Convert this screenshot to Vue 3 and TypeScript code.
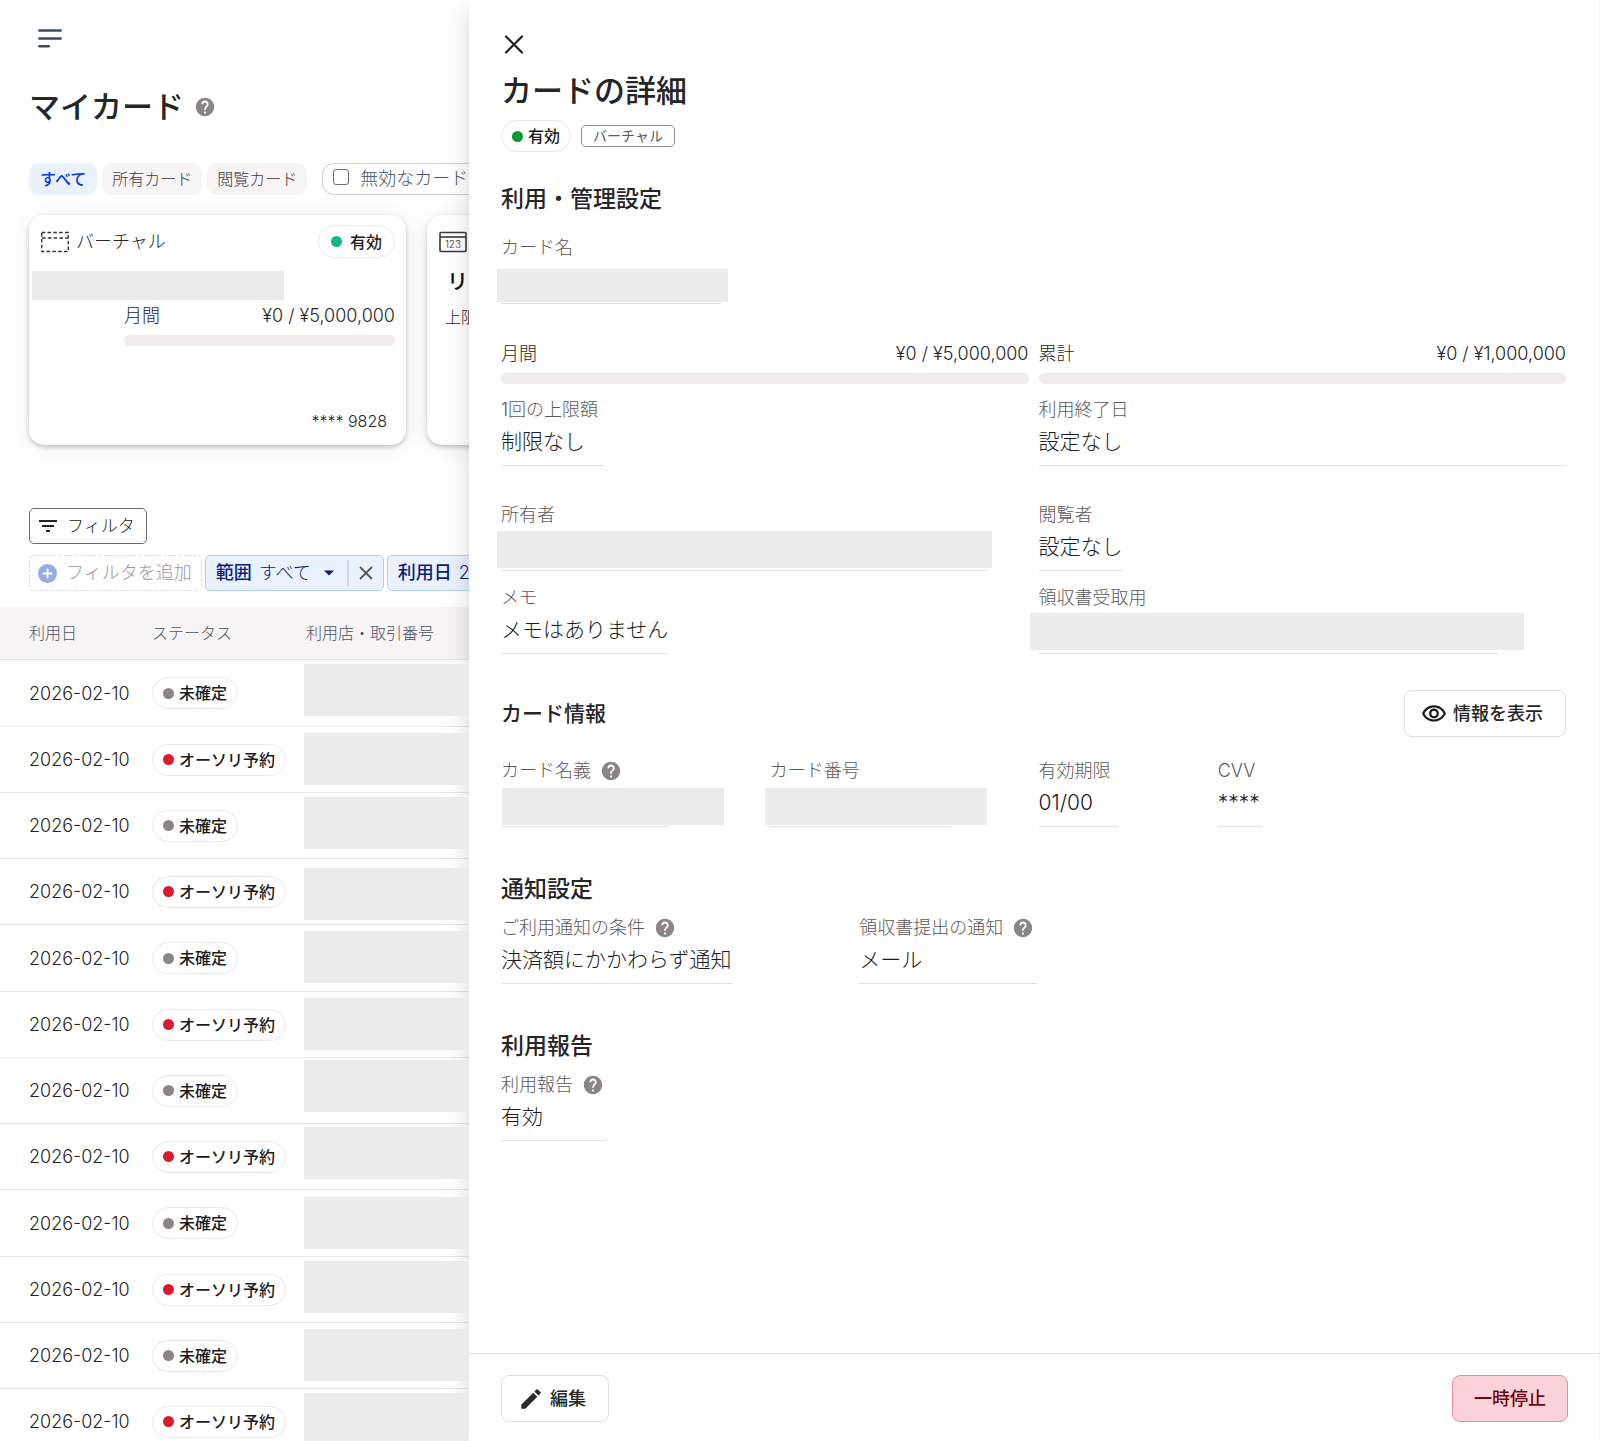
<script setup lang="ts">
import { defineComponent, h } from 'vue'

interface Mask {
  left: number
  top: number
  width: number
  line: number
  slim?: boolean
}

interface Field {
  label: string
  value?: string
  help?: boolean
  span: number
  stretch?: boolean
  mask?: Mask
}

interface Transaction {
  date: string
  status: 'pending' | 'authorized'
  maskTop: number
}

const HelpIcon = defineComponent({
  name: 'HelpIcon',
  render() {
    return h('svg', { viewBox: '0 0 24 24', width: 22, height: 22, fill: '#8b8585', 'aria-hidden': 'true' }, [
      h('path', {
        d: 'M12 2C6.48 2 2 6.48 2 12s4.48 10 10 10 10-4.48 10-10S17.52 2 12 2zm1 17h-2v-2h2v2zm2.07-7.75-.9.92C13.45 12.9 13 13.5 13 15h-2v-.5c0-1.1.45-2.1 1.17-2.83l1.24-1.26c.37-.36.59-.86.59-1.41 0-1.1-.9-2-2-2s-2 .9-2 2H8c0-2.21 1.79-4 4-4s4 1.79 4 4c0 .88-.36 1.68-.93 2.25z',
      }),
    ])
  },
})

const statusLabels = { pending: '未確定', authorized: 'オーソリ予約' }

const maskTops = [4, 6, 4, 9, 6, 6, 2, 3, 7, 4, 6, 4]
const transactions: Transaction[] = maskTops.map((maskTop, i) => ({
  date: '2026-02-10',
  status: i % 2 ? 'authorized' : 'pending',
  maskTop,
}))

const nameFields: Field[] = [
  { label: 'カード名', span: 6, mask: { left: -4, top: 35, width: 231, line: 220, slim: true } },
]

const limits = [
  { label: '月間', amount: '¥0 / ¥5,000,000' },
  { label: '累計', amount: '¥0 / ¥1,000,000' },
]

const limitFields: Field[] = [
  { label: '1回の上限額', value: '制限なし', span: 6 },
  { label: '利用終了日', value: '設定なし', span: 6, stretch: true },
]

const ownerFields: Field[] = [
  { label: '所有者', span: 6, mask: { left: -4, top: 30, width: 495, line: 487 } },
  { label: '閲覧者', value: '設定なし', span: 6 },
  { label: 'メモ', value: 'メモはありません', span: 6 },
  { label: '領収書受取用', span: 6, mask: { left: -9, top: 29, width: 494, line: 459 } },
]

const cardFields: Field[] = [
  { label: 'カード名義', help: true, span: 3, mask: { left: 1, top: 31, width: 222, line: 168 } },
  { label: 'カード番号', span: 3, mask: { left: -5, top: 31, width: 222, line: 181 } },
  { label: '有効期限', value: '01/00', span: 2 },
  { label: 'CVV', value: '****', span: 2 },
]

const noticeFields: Field[] = [
  { label: 'ご利用通知の条件', value: '決済額にかかわらず通知', help: true, span: 4 },
  { label: '領収書提出の通知', value: 'メール', help: true, span: 4 },
]

const reportFields: Field[] = [{ label: '利用報告', value: '有効', help: true, span: 4 }]

const FieldGrid = defineComponent({
  name: 'FieldGrid',
  props: { fields: { type: Array as () => Field[], required: true } },
  render() {
    return h(
      'dl',
      { class: 'field-grid' },
      this.fields.map((f) =>
        h('div', { class: ['field', `span-${f.span}`, { stretch: f.stretch }], key: f.label }, [
          h('dt', { class: 'field-label' }, [
            f.label,
            f.help
              ? h('button', { class: 'help', type: 'button', 'aria-label': `${f.label}の説明` }, [h(HelpIcon)])
              : null,
          ]),
          f.mask
            ? h('dd', { class: 'field-value', style: { width: `${f.mask.line}px` } }, [
                h('span', {
                  class: ['mask', { slim: f.mask.slim }],
                  style: { left: `${f.mask.left}px`, top: `${f.mask.top}px`, width: `${f.mask.width}px` },
                }),
              ])
            : h('dd', { class: 'field-value' }, f.value),
        ]),
      ),
    )
  },
})
</script>

<template>
  <div class="shell">
    <main class="page">
      <button class="menu" type="button" aria-label="メニュー">
        <svg width="24" height="20" viewBox="0 0 24 20" fill="none" stroke="#3d4a5f" stroke-width="2.4" stroke-linecap="round">
          <path d="M1.3 2.5h21.4M1.3 10.5h21.4M1.3 18.3h9.6" />
        </svg>
      </button>

      <h1 class="page-title">
        マイカード
        <button class="help" type="button" aria-label="マイカードの説明"><HelpIcon /></button>
      </h1>

      <div class="tabs">
        <button class="tab active" type="button">すべて</button>
        <button class="tab" type="button">所有カード</button>
        <button class="tab" type="button">閲覧カード</button>
        <label class="toggle"><input type="checkbox" />無効なカード</label>
      </div>

      <div class="cards">
        <article class="card">
          <header class="card-head">
            <svg width="28" height="22" viewBox="0 0 28 22" fill="none" stroke="#333" stroke-width="1.4" stroke-dasharray="3.6 2.2">
              <path d="M.7 1.5h26.6v19H.7zM1 7h26" />
            </svg>
            <span class="card-type">バーチャル</span>
            <span class="badge large"><i class="dot green"></i>有効</span>
          </header>
          <div class="card-mask"></div>
          <div class="card-limit">
            <div class="limit-row"><span>月間</span><span>¥0 / ¥5,000,000</span></div>
            <div class="bar"></div>
          </div>
          <p class="card-number">**** 9828</p>
        </article>
        <article class="card">
          <header class="card-head">
            <svg width="28" height="22" viewBox="0 0 28 22" fill="none" stroke="#3a3a3a" stroke-width="1.6">
              <rect x="1" y="1.5" width="26" height="19" rx="1" />
              <path d="M1 6h26" />
              <text x="14" y="17" text-anchor="middle" font-size="10" fill="#3a3a3a" stroke="none">123</text>
            </svg>
          </header>
          <p class="card-name">リン</p>
          <p class="card-cap">上限額</p>
        </article>
      </div>

      <div class="filters">
        <button class="filter-toggle" type="button">
          <svg width="18" height="12" viewBox="0 0 18 12" stroke="#222" stroke-width="1.8">
            <path d="M0 1h18M3 6h12M7 11h4" />
          </svg>
          フィルタ
        </button>
        <div class="chips">
          <button class="add-filter" type="button">
            <svg width="19" height="19" viewBox="0 0 20 20">
              <circle cx="10" cy="10" r="10" fill="#97abe6" />
              <path d="M10 5v10M5 10h10" stroke="#fff" stroke-width="1.9" />
            </svg>
            フィルタを追加
          </button>
          <div class="chip">
            <button class="chip-main" type="button">
              <b>範囲</b>すべて
              <svg width="10" height="6" viewBox="0 0 10 6" fill="#0a1f78"><path d="M0 .5h10L5 5.5z" /></svg>
            </button>
            <button class="chip-clear" type="button" aria-label="範囲を解除">
              <svg width="14" height="14" viewBox="0 0 14 14" stroke="#5c5656" stroke-width="1.8">
                <path d="M1 1l12 12M13 1L1 13" />
              </svg>
            </button>
          </div>
          <div class="chip wide">
            <button class="chip-main" type="button"><b>利用日</b>2</button>
          </div>
        </div>
      </div>

      <table class="transactions">
        <thead>
          <tr>
            <th class="col-date">利用日</th>
            <th class="col-status">ステータス</th>
            <th class="col-shop">利用店・取引番号</th>
          </tr>
        </thead>
        <tbody>
          <tr v-for="(t, i) in transactions" :key="i">
            <td class="col-date">{{ t.date }}</td>
            <td class="col-status">
              <span class="badge"><i class="dot" :class="t.status"></i>{{ statusLabels[t.status] }}</span>
            </td>
            <td class="col-shop"><div class="shop-mask" :style="{ marginTop: `${t.maskTop}px` }"></div></td>
          </tr>
        </tbody>
      </table>
    </main>

    <aside class="drawer" aria-labelledby="drawer-title">
      <div class="drawer-body">
        <button class="close" type="button" aria-label="閉じる">
          <svg width="20" height="20" viewBox="0 0 20 20" stroke="#1f1f1f" stroke-width="2.2" stroke-linecap="round">
            <path d="M2 2.5l16 16M18 2.5L2 18.5" />
          </svg>
        </button>
        <h2 id="drawer-title" class="drawer-title">カードの詳細</h2>
        <div class="tags">
          <span class="badge"><i class="dot deep"></i>有効</span>
          <span class="tag">バーチャル</span>
        </div>

        <section class="settings">
          <h3>利用・管理設定</h3>
          <FieldGrid :fields="nameFields" />
          <div class="limits">
            <div v-for="l in limits" :key="l.label">
              <div class="limit-row"><span>{{ l.label }}</span><span>{{ l.amount }}</span></div>
              <div class="bar"></div>
            </div>
          </div>
          <FieldGrid :fields="limitFields" />
          <FieldGrid class="owners" :fields="ownerFields" />
        </section>

        <section class="info">
          <div class="info-head">
            <h4>カード情報</h4>
            <button class="outlined" type="button">
              <svg width="26" height="26" viewBox="0 0 24 24" fill="#1a1a1a">
                <path d="M12 6c3.79 0 7.17 2.13 8.82 5.5C19.17 14.87 15.79 17 12 17s-7.17-2.13-8.82-5.5C4.83 8.13 8.21 6 12 6m0-2C7 4 2.73 7.11 1 11.5 2.73 15.89 7 19 12 19s9.27-3.11 11-7.5C21.27 7.11 17 4 12 4zm0 5c1.38 0 2.5 1.12 2.5 2.5S13.38 14 12 14s-2.5-1.12-2.5-2.5S10.62 9 12 9m0-2c-2.48 0-4.5 2.02-4.5 4.5S9.52 16 12 16s4.5-2.02 4.5-4.5S14.48 7 12 7z" />
              </svg>
              情報を表示
            </button>
          </div>
          <FieldGrid :fields="cardFields" />
        </section>

        <section class="group">
          <h3>通知設定</h3>
          <FieldGrid :fields="noticeFields" />
        </section>

        <section class="group">
          <h3>利用報告</h3>
          <FieldGrid :fields="reportFields" />
        </section>
      </div>

      <footer class="drawer-foot">
        <button class="outlined" type="button">
          <svg width="26" height="26" viewBox="0 0 24 24" fill="#2b2b2b">
            <path d="M3 17.25V21h3.75L17.81 9.94l-3.75-3.75L3 17.25zM20.71 7.04c.39-.39.39-1.02 0-1.41l-2.34-2.34a.9959.9959 0 0 0-1.41 0l-1.83 1.83 3.75 3.75 1.83-1.83z" />
          </svg>
          編集
        </button>
        <button class="danger" type="button">一時停止</button>
      </footer>
    </aside>
  </div>
</template>

<style>
body {
  margin: 0;
  background: #fff;
}

.field-grid {
  display: grid;
  grid-template-columns: repeat(12, 1fr);
  column-gap: 10px;
  row-gap: 13px;
  margin: 0;
}

.field {
  justify-self: start;
  position: relative;
}

.field.stretch {
  justify-self: stretch;
}

.span-2 { grid-column: span 2; }
.span-3 { grid-column: span 3; }
.span-4 { grid-column: span 4; }
.span-6 { grid-column: span 6; }

.field-label {
  display: flex;
  align-items: center;
  height: 28px;
  gap: 7px;
  padding-right: 7px;
  font-size: 18px;
  line-height: 30px;
  color: #5c5858;
  white-space: nowrap;
}

.field-label:has(.help) {
  padding-right: 0;
}

.field-value {
  height: 34px;
  margin: 0;
  padding-bottom: 7px;
  border-bottom: 1px solid #dde5e5;
  font-size: 21px;
  line-height: 36px;
  color: #1c1c1c;
  white-space: nowrap;
}

.mask {
  position: absolute;
  height: 37px;
  background: #ebebeb;
}

.mask.slim {
  height: 33px;
}

.help {
  display: inline-flex;
  padding: 2px;
  border: 0;
  background: none;
}
</style>

<style scoped>
.shell {
  position: relative;
  height: 100vh;
  overflow: hidden;
  font-family: Inter, "Noto Sans CJK JP", sans-serif;
  font-weight: 300;
  color: #262626;
}

button {
  font-family: inherit;
  line-height: 20px;
  color: inherit;
}

h1, h2, h3, h4, p {
  margin: 0;
}

.page {
  display: flex;
  flex-direction: column;
}

.menu {
  align-self: flex-start;
  display: flex;
  margin: 28px 0 0 38px;
  padding: 0;
  border: 0;
  background: none;
}

.page-title {
  display: flex;
  align-items: center;
  gap: 8px;
  margin: 38px 29px 0;
  height: 42px;
  font-size: 31px;
  line-height: 42px;
  font-weight: 500;
}

.tabs {
  display: flex;
  gap: 5px;
  margin: 35px 0 0 29px;
}

.tab {
  height: 32px;
  padding: 0 10px;
  border: 0;
  border-radius: 10px;
  background: #f6f4f5;
  font-size: 16px;
  font-weight: 300;
  color: #3f3b3b;
  white-space: nowrap;
}

.tab.active {
  padding: 0 11px;
  background: #eaf1ff;
  color: #0b3fd0;
  font-weight: 500;
}

.toggle {
  display: flex;
  align-items: center;
  box-sizing: border-box;
  width: 260px;
  height: 32px;
  margin-left: 10px;
  padding-left: 10px;
  gap: 11px;
  border: 1px solid #cfcfcf;
  border-radius: 12px;
  font-size: 18px;
  line-height: 28px;
  color: #45526a;
  white-space: nowrap;
}

.toggle input {
  appearance: none;
  width: 16px;
  height: 16px;
  margin: 0 0 4px;
  border: 1px solid #6f6f6f;
  border-radius: 3px;
  background: #fff;
}

.cards {
  display: flex;
  gap: 21px;
  margin: 20px 0 0 29px;
}

.card {
  display: flex;
  flex-direction: column;
  box-sizing: border-box;
  flex: 0 0 377px;
  height: 230px;
  padding: 10px 11px 0 12px;
  border-radius: 15px;
  background: #fff;
  box-shadow: 0 2px 4px rgba(0, 0, 0, 0.22), 0 2px 26px rgba(0, 0, 0, 0.08);
}

.card-head {
  display: flex;
  align-items: center;
  height: 33px;
}

.card-type {
  flex: 1;
  margin-left: 7px;
  font-size: 18px;
  line-height: 20px;
}

.badge {
  display: inline-flex;
  align-items: center;
  box-sizing: border-box;
  height: 32px;
  padding: 0 10px;
  gap: 5px;
  border: 1px solid #e9e7e7;
  border-radius: 16px;
  background: #fff;
  font-size: 16px;
  line-height: 20px;
  font-weight: 500;
  color: #1c1c1c;
  white-space: nowrap;
}

.badge.large {
  height: 33px;
  padding: 0 12px;
  gap: 8px;
}

.dot {
  width: 11px;
  height: 11px;
  border-radius: 50%;
}

.dot.green { background: #12b886; }
.dot.deep { background: #079a35; }
.dot.pending { background: #8b8585; }
.dot.authorized { background: #dc1a2e; }

.card-mask {
  width: 252px;
  height: 29px;
  margin: 13px 0 0 -9px;
  background: #ebebeb;
}

.card-limit {
  margin: 2px 0 0 83px;
}

.limit-row {
  display: flex;
  justify-content: space-between;
  margin-bottom: 5px;
  font-size: 18px;
  line-height: 28px;
  white-space: nowrap;
}

.bar {
  height: 11px;
  border-radius: 6px;
  background: #f0ecec;
}

.card-number {
  margin: 61px 8px 0 0;
  text-align: right;
  font-size: 16px;
  line-height: 28px;
}

.card-name {
  margin: 9px 0 0 8px;
  font-size: 21px;
  line-height: 30px;
  font-weight: 500;
  color: #111;
}

.card-cap {
  margin: 6px 0 0 6px;
  font-size: 16px;
  line-height: 28px;
}

.filters {
  display: flex;
  flex-direction: column;
  gap: 11px;
  margin: 63px 0 0 29px;
}

.filter-toggle {
  align-self: flex-start;
  display: flex;
  align-items: center;
  gap: 10px;
  height: 36px;
  padding: 0 11px 0 9px;
  border: 1px solid #6b6b6b;
  border-radius: 5px;
  background: #fff;
  font-size: 17px;
  font-weight: 300;
}

.chips {
  display: flex;
  gap: 3px;
}

.add-filter {
  display: flex;
  align-items: center;
  gap: 9px;
  height: 36px;
  padding: 0 9px 0 8px;
  border: 1px dashed #dcdada;
  border-radius: 5px;
  background: #fff;
  font-size: 18px;
  font-weight: 300;
  color: #9c9898;
  white-space: nowrap;
}

.chip {
  display: flex;
  align-items: center;
  box-sizing: border-box;
  height: 36px;
  border: 1px solid #b5cffb;
  border-radius: 5px;
  background: #eaf1ff;
}

.chip.wide {
  flex: 0 0 240px;
}

.chip-main {
  display: flex;
  align-items: center;
  height: 26px;
  padding: 0 13px 0 10px;
  gap: 7px;
  border: 0;
  background: none;
  font-size: 18px;
  font-weight: 300;
  color: #0a1f78;
  white-space: nowrap;
}

.chip-main b {
  font-weight: 500;
}

.chip-main svg {
  margin-left: 6px;
}

.chip-clear {
  display: flex;
  align-items: center;
  height: 26px;
  padding: 0 10px;
  border: 0;
  border-left: 2px solid #cfd6e4;
  background: none;
}

.transactions {
  width: 100%;
  margin-top: 16px;
  border-collapse: separate;
  border-spacing: 0;
  table-layout: fixed;
}

th {
  height: 52px;
  padding: 0;
  border-bottom: 1px solid #e9e5e6;
  background: #f6f4f5;
  text-align: left;
  font-size: 16px;
  line-height: 20px;
  font-weight: 300;
  color: #4c5361;
}

th.col-date,
th.col-status {
  width: 152px;
  box-sizing: border-box;
}

th.col-shop {
  padding-left: 2px;
}

.col-date {
  padding-left: 29px;
}

td {
  box-sizing: border-box;
  height: 66px;
  padding: 0;
  border-bottom: 1px solid #e6e6e6;
  font-size: 18px;
}

tbody tr:nth-child(4n + 1) td {
  height: 67px;
}

td.col-shop {
  vertical-align: top;
}

.shop-mask {
  position: relative;
  z-index: 2;
  width: 164px;
  height: 52px;
  background: #ebebeb;
}

.drawer {
  position: absolute;
  inset: 0 0 0 469px;
  z-index: 1;
  display: flex;
  flex-direction: column;
  border-right: 1px solid #f1f1fb;
  background: #fff;
  box-shadow: 0 8px 9px -4px rgba(0, 0, 0, 0.12), 0 16px 24px 2px rgba(0, 0, 0, 0.07), 0 6px 28px 3px rgba(0, 0, 0, 0.06);
}

.drawer-body {
  flex: 1;
  min-height: 0;
  padding: 34px 33px 0 32px;
}

.close {
  display: flex;
  margin-left: 3px;
  padding: 0;
  border: 0;
  background: none;
}

.drawer-title {
  margin-top: 17px;
  font-size: 31px;
  line-height: 40px;
  font-weight: 500;
}

.tags {
  display: flex;
  align-items: center;
  gap: 10px;
  margin-top: 9px;
}

.tag {
  box-sizing: border-box;
  height: 22px;
  padding: 0 11px;
  border: 1px solid #8f8b8b;
  border-radius: 5px;
  font-size: 14px;
  line-height: 20px;
  font-weight: 400;
  color: #5d5959;
}

h3 {
  font-size: 23px;
  line-height: 36px;
  font-weight: 500;
}

.settings {
  margin-top: 29px;
}

.settings h3 {
  margin-bottom: 17px;
}

.limits {
  display: grid;
  grid-template-columns: 1fr 1fr;
  gap: 10px;
  margin: 36px 0 12px;
}

.owners {
  margin-top: 35px;
}

.info {
  margin-top: 36px;
}

.info-head {
  display: flex;
  justify-content: space-between;
  align-items: center;
  margin-bottom: 20px;
}

h4 {
  font-size: 21px;
  line-height: 32px;
  font-weight: 500;
}

.outlined,
.danger {
  display: flex;
  align-items: center;
  box-sizing: border-box;
  height: 47px;
  border: 1px solid #dedede;
  border-radius: 8px;
  background: #fff;
  font-size: 18px;
  font-weight: 500;
  white-space: nowrap;
}

.outlined {
  gap: 6px;
  padding: 0 22px 0 16px;
}

.group {
  margin-top: 44px;
}

.group h3 {
  margin-bottom: 7px;
}

.drawer-foot {
  display: flex;
  justify-content: space-between;
  padding: 21px 31px 19px 32px;
  border-top: 1px solid #dde5e5;
}

.danger {
  padding: 0 21px;
  border-color: #f08c98;
  background: #fad3d8;
  color: #6d0512;
}
</style>
